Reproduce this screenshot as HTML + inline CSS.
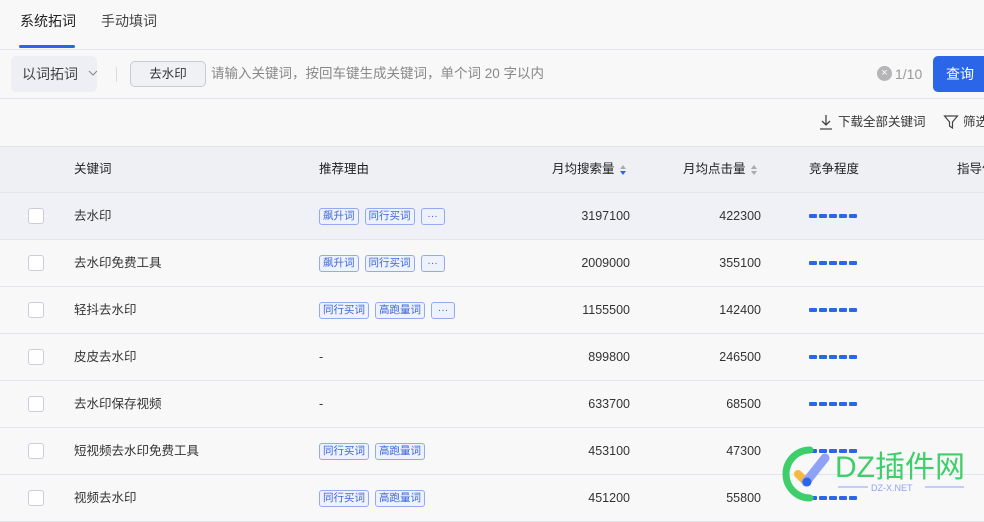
<!DOCTYPE html>
<html><head><meta charset="utf-8"><style>
*{margin:0;padding:0;box-sizing:border-box}
body{width:984px;height:511px;overflow:hidden;background:#f8f8f9;font-family:"Liberation Sans","Noto Sans CJK SC",sans-serif;color:#333;font-size:13px;position:relative;line-height:18px}
.abs{position:absolute;white-space:nowrap}
.tab{top:12px;font-size:14px}
.row{position:absolute;left:0;width:984px;height:47px;border-bottom:1px solid #e4e5ea}
.row>*{position:absolute;top:0;line-height:46px;font-size:12.5px;white-space:nowrap}
.cb{left:28px;top:15px!important;width:16px;height:16px;border:1px solid #ccd;border-radius:3px;background:#fff}
.kw{left:74px}
.tags{left:319px;top:15px!important;display:flex;gap:6px;line-height:15px!important}
.tag{height:17px;line-height:15px;padding:0 3px;border:1px solid #93a9f2;border-radius:3px;background:#eef2fd;color:#3b66db;font-size:10.5px}
.dots{width:24px;text-align:center}
.n1{right:354px}
.n2{right:223px}
.bar{left:809px;top:21px!important;display:flex;gap:2px}
.bar i{display:block;width:8px;height:4px;background:#2b66e8;border-radius:1px}
.hd{position:absolute;top:146px;left:0;width:984px;height:47px;background:#eff0f4;border-top:1px solid #e4e5ea;border-bottom:1px solid #e4e5ea}
.hd span{position:absolute;top:0;line-height:45px;font-size:12.5px;color:#222;white-space:nowrap}
.sort{display:inline-block;vertical-align:middle;margin-left:5px;width:6px;height:10px;position:relative}
.sort:before,.sort:after{content:"";position:absolute;left:0;border-left:3px solid transparent;border-right:3px solid transparent}
.sort:before{top:0;border-bottom:4px solid #aaa}
.sort:after{bottom:0;border-top:4px solid #aaa}
.sort.b:after{border-top-color:#2b66e8}
</style></head><body>
<div class="abs tab" style="left:20px;color:#222">系统拓词</div>
<div class="abs tab" style="left:101px;color:#444">手动填词</div>
<div class="abs" style="left:19px;top:45px;width:56px;height:3px;background:#2b66e8;border-radius:2px"></div>
<div class="abs" style="left:0;top:49px;width:984px;height:1px;background:#e4e5ea"></div>
<div class="abs" style="left:11px;top:56px;width:86px;height:36px;background:#eeeff4;border-radius:5px;font-size:14px;color:#444;line-height:36px;padding-left:11px">以词拓词</div>
<svg class="abs" style="left:88px;top:70px" width="10" height="7" viewBox="0 0 10 7" fill="none" stroke="#888" stroke-width="1.1"><path d="M1 1l4 4 4-4"/></svg>
<div class="abs" style="left:116px;top:67px;width:1px;height:15px;background:#ddd"></div>
<div class="abs" style="left:130px;top:61px;width:76px;height:26px;border:1px solid #c9ccd6;border-radius:5px;background:#f0f1f5;text-align:center;line-height:24px;font-size:12.5px;color:#333">去水印</div>
<div class="abs" style="left:211px;top:65px;font-size:13.5px;color:#888">请输入关键词，按回车键生成关键词，单个词 20 字以内</div>
<div class="abs" style="left:877px;top:66px;width:15px;height:15px;border-radius:50%;background:#b5b5b8;color:#fff;font-size:11px;text-align:center;line-height:15px">×</div>
<div class="abs" style="left:895px;top:65px;font-size:14px;color:#999">1/10</div>
<div class="abs" style="left:933px;top:56px;width:60px;height:36px;background:#2b66e8;border-radius:5px;color:#fff;font-size:14px;line-height:36px;padding-left:13px">查询</div>
<div class="abs" style="left:0;top:98px;width:984px;height:1px;background:#e4e5ea"></div>
<svg class="abs" style="left:818px;top:114px" width="16" height="16" viewBox="0 0 16 16" fill="none" stroke="#444" stroke-width="1.3"><path d="M8 1v10M4 7l4 4 4-4M2 15h12"/></svg>
<div class="abs" style="left:838px;top:113px;font-size:12.5px;color:#333">下载全部关键词</div>
<svg class="abs" style="left:943px;top:114px" width="16" height="16" viewBox="0 0 16 16" fill="none" stroke="#444" stroke-width="1.2"><path d="M1.5 2h13l-5 6v6l-3-2V8z"/></svg>
<div class="abs" style="left:963px;top:113px;font-size:12.5px;color:#333">筛选</div>
<div class="hd"><span style="left:74px">关键词</span><span style="left:319px">推荐理由</span><span style="left:552px">月均搜索量<i class="sort b"></i></span><span style="left:683px">月均点击量<i class="sort"></i></span><span style="left:809px">竞争程度</span><span style="left:957px">指导价</span></div>

<div class="row" style="top:193px;background:#f0f1f6"><div class="cb"></div><div class="kw">去水印</div><div class="tags"><span class="tag">飙升词</span><span class="tag">同行买词</span><span class="tag dots">···</span></div><div class="n1">3197100</div><div class="n2">422300</div><div class="bar"><i></i><i></i><i></i><i></i><i></i></div></div>
<div class="row" style="top:240px"><div class="cb"></div><div class="kw">去水印免费工具</div><div class="tags"><span class="tag">飙升词</span><span class="tag">同行买词</span><span class="tag dots">···</span></div><div class="n1">2009000</div><div class="n2">355100</div><div class="bar"><i></i><i></i><i></i><i></i><i></i></div></div>
<div class="row" style="top:287px"><div class="cb"></div><div class="kw">轻抖去水印</div><div class="tags"><span class="tag">同行买词</span><span class="tag">高跑量词</span><span class="tag dots">···</span></div><div class="n1">1155500</div><div class="n2">142400</div><div class="bar"><i></i><i></i><i></i><i></i><i></i></div></div>
<div class="row" style="top:334px"><div class="cb"></div><div class="kw">皮皮去水印</div><div style="left:319px">-</div><div class="n1">899800</div><div class="n2">246500</div><div class="bar"><i></i><i></i><i></i><i></i><i></i></div></div>
<div class="row" style="top:381px"><div class="cb"></div><div class="kw">去水印保存视频</div><div style="left:319px">-</div><div class="n1">633700</div><div class="n2">68500</div><div class="bar"><i></i><i></i><i></i><i></i><i></i></div></div>
<div class="row" style="top:428px"><div class="cb"></div><div class="kw">短视频去水印免费工具</div><div class="tags"><span class="tag">同行买词</span><span class="tag">高跑量词</span></div><div class="n1">453100</div><div class="n2">47300</div><div class="bar"><i></i><i></i><i></i><i></i><i></i></div></div>
<div class="row" style="top:475px"><div class="cb"></div><div class="kw">视频去水印</div><div class="tags"><span class="tag">同行买词</span><span class="tag">高跑量词</span></div><div class="n1">451200</div><div class="n2">55800</div><div class="bar"><i></i><i></i><i></i><i></i><i></i></div></div>

<svg class="abs" style="left:780px;top:440px" width="204" height="71" viewBox="0 0 204 71">
<path d="M30 10 A24 24 0 1 0 30 58" fill="none" stroke="#3ecf6a" stroke-width="7" stroke-linecap="round"/>
<path d="M18 34 l8 8" stroke="#f5b942" stroke-width="8" stroke-linecap="round"/>
<path d="M26 42 L45 18" stroke="#8fa2f5" stroke-width="9" stroke-linecap="round"/>
<circle cx="27" cy="42" r="4.5" fill="#2b66e8"/>
<text x="55" y="37" font-family="Liberation Sans,Noto Sans CJK SC,sans-serif" font-size="30" fill="#3ecf6a">DZ插件网</text>
<line x1="58" y1="47" x2="88" y2="47" stroke="#8fa2f5"/>
<text x="91" y="51" font-family="Liberation Sans,sans-serif" font-size="9" fill="#8fa2f5">DZ-X.NET</text>
<line x1="145" y1="47" x2="184" y2="47" stroke="#8fa2f5"/>
</svg>
</body></html>
